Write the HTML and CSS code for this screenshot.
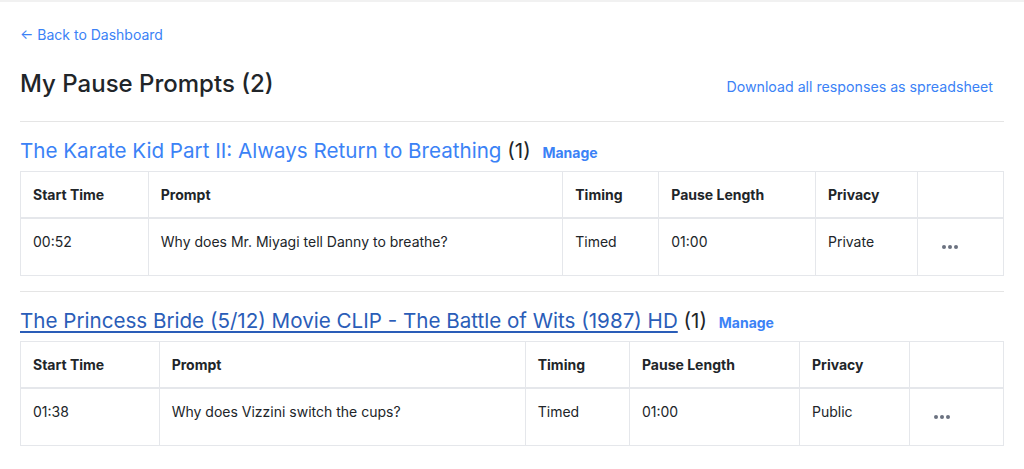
FILE: index.html
```html
<!DOCTYPE html>
<html>
  <head>
    <meta name="viewport" content="width=device-width, initial-scale=1">
    <link rel="stylesheet" href="styles.css">
  </head>

  <body>
    <div class="page">
      <a class="back" href="#">&larr; Back to Dashboard</a>

      <div class="head">
        <h1>My Pause Prompts (2)</h1>
        <a class="download" href="#">Download all responses as spreadsheet</a>
      </div>

      <div class="video">
        <h2><a class="video-link" href="#">The Karate Kid Part II: Always Return to Breathing</a> (1) <a class="manage" href="#">Manage</a></h2>
        <table class="prompts">
          <thead>
            <tr>
              <th>Start Time</th>
              <th>Prompt</th>
              <th>Timing</th>
              <th>Pause Length</th>
              <th>Privacy</th>
              <th></th>
            </tr>
          </thead>
          <tbody>
            <tr>
              <td>00:52</td>
              <td>Why does Mr. Miyagi tell Danny to breathe?</td>
              <td>Timed</td>
              <td>01:00</td>
              <td>Private</td>
              <td><button class="more"><svg width="16" height="4" viewBox="0 0 16 4"><circle cx="2" cy="2" r="2"/><circle cx="8" cy="2" r="2"/><circle cx="14" cy="2" r="2"/></svg></button></td>
            </tr>
          </tbody>
        </table>
      </div>

      <div class="video">
        <h2><a class="video-link visited" href="#">The Princess Bride (5/12) Movie CLIP - The Battle of Wits (1987) HD</a> (1) <a class="manage" href="#">Manage</a></h2>
        <table class="prompts">
          <thead>
            <tr>
              <th>Start Time</th>
              <th>Prompt</th>
              <th>Timing</th>
              <th>Pause Length</th>
              <th>Privacy</th>
              <th></th>
            </tr>
          </thead>
          <tbody>
            <tr>
              <td>01:38</td>
              <td>Why does Vizzini switch the cups?</td>
              <td>Timed</td>
              <td>01:00</td>
              <td>Public</td>
              <td><button class="more"><svg width="16" height="4" viewBox="0 0 16 4"><circle cx="2" cy="2" r="2"/><circle cx="8" cy="2" r="2"/><circle cx="14" cy="2" r="2"/></svg></button></td>
            </tr>
          </tbody>
        </table>
      </div>
    </div>
  </body>
</html>
```

FILE: styles.css
```css
/* Page */
body {
margin: 0;
border-top: 2px solid #f1f1f1;
font-family: Inter, "Liberation Sans", sans-serif;
font-size: 14px;
line-height: 1.5;
color: #212529;
background: #ffffff;
}

a {
color: #3b82f6;
text-decoration: none;
}

.page {
padding: 22px 20px 0 20px;
}

.back {
display: inline-block;
font-size: 14px;
}

/* Title row */
.head {
display: flex;
justify-content: space-between;
align-items: baseline;
margin-top: 25px;
padding: 0 11px 22px 0;
border-bottom: 1px solid #e5e5e5;
}

.head h1 {
margin: 0;
font-size: 24px;
font-weight: 500;
line-height: 1.2;
}

.download {
font-size: 14.2px;
}

/* Each video block */
.video {
padding-top: 17px;
padding-bottom: 15px;
border-bottom: 1px solid #e5e5e5;
}

.video:last-child {
border-bottom: none;
}

.video h2 {
margin: 0 0 6px 0;
font-size: 20.6px;
font-weight: 400;
line-height: 24px;
}

.video-link.visited {
color: #2a5db8;
text-decoration: underline;
text-underline-offset: 3px;
}

.manage {
margin-left: 6px;
font-size: 14px;
font-weight: 700;
}

/* Tables */
.prompts {
width: 100%;
border-collapse: collapse;
}

.prompts th,
.prompts td {
padding: 12px;
border: 1px solid #e5e7eb;
text-align: left;
vertical-align: top;
}

.prompts th {
font-weight: 700;
border-bottom: 2px solid #e5e7eb;
}

.more {
border: none;
background: none;
padding: 14px 12px;
cursor: pointer;
fill: #6b7280;
line-height: 0;
}
```
